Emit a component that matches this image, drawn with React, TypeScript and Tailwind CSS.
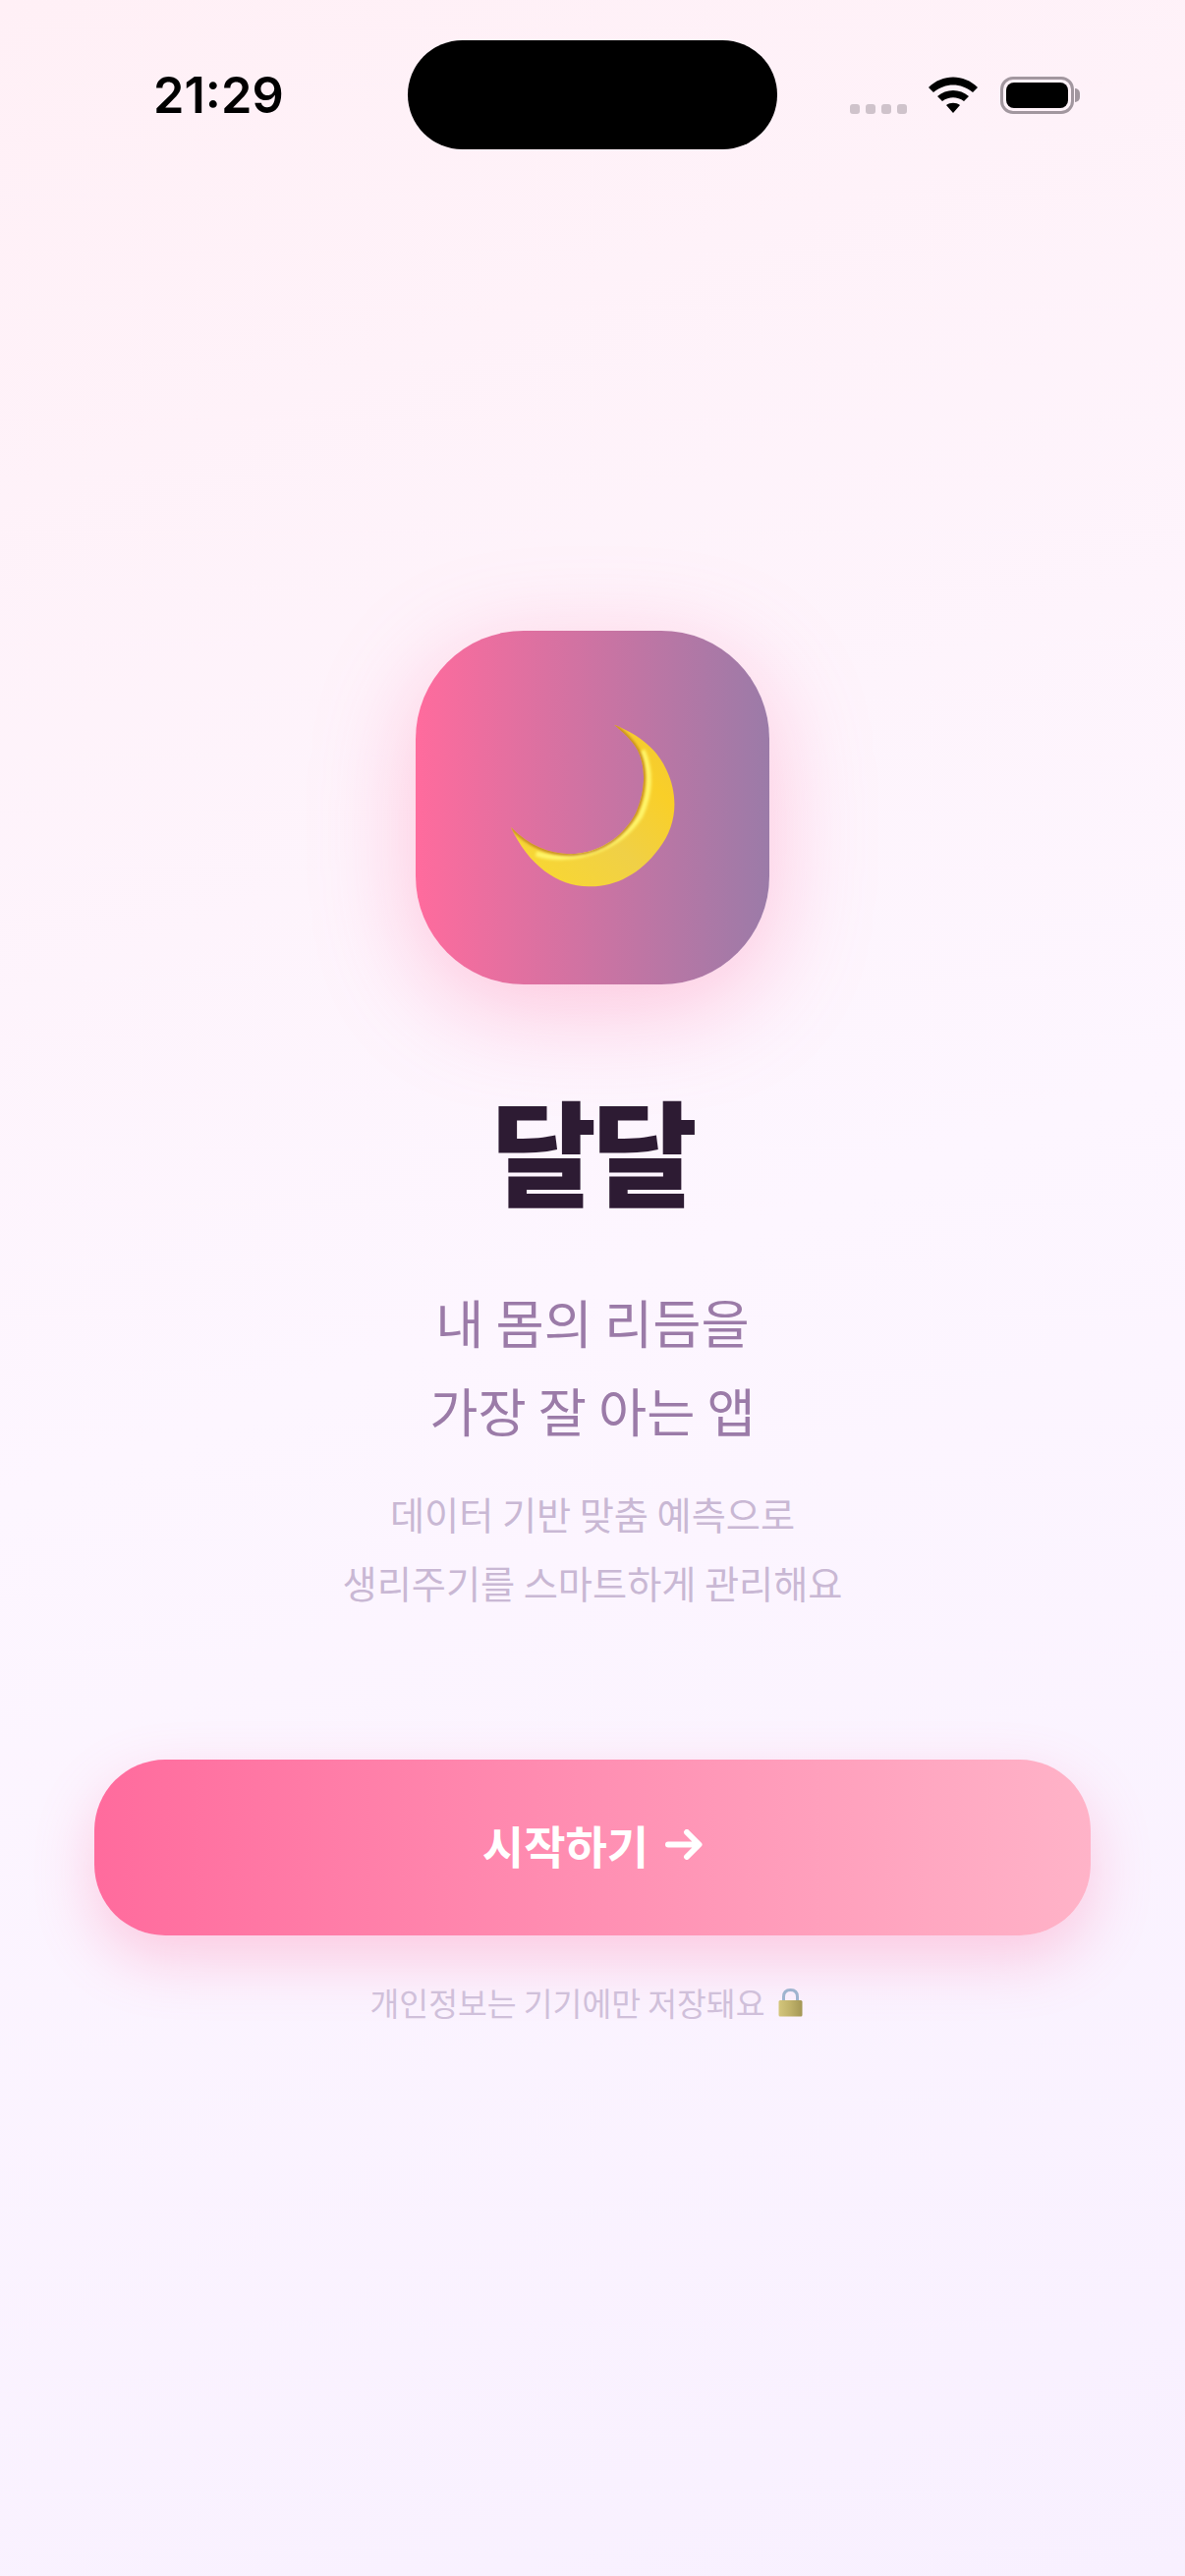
const StatusBar = () => {
  return (
    <div className="flex items-start pt-[41px] pl-[156px] h-[152px]">
      <div className="w-[259px] pt-[26px] text-[50.5px] leading-[60px] font-semibold text-black font-['Inter',sans-serif]">
        21:29
      </div>
      <div className="w-[376px] h-[111px] rounded-[56px] bg-black shrink-0" />
      <div className="flex items-start ml-[74px] pt-[37px]">
        <div className="flex gap-[6px] mt-[28px] mr-[22px]">
          <span className="w-[10px] h-[10px] rounded-[3px] bg-[#cfc3cb]" />
          <span className="w-[10px] h-[10px] rounded-[3px] bg-[#cfc3cb]" />
          <span className="w-[10px] h-[10px] rounded-[3px] bg-[#cfc3cb]" />
          <span className="w-[10px] h-[10px] rounded-[3px] bg-[#cfc3cb]" />
        </div>
        <svg width="50" height="38" viewBox="0 0 50 38" className="mr-[23px]">
          <path d="M0 11 C14 -3 36 -3 50 11 L45 16 C33 6 17 6 5 16 Z" fill="#000" />
          <path d="M9 20 C18 12 32 12 41 20 L36 25 C29 20 21 20 14 25 Z" fill="#000" />
          <path d="M18 29 C22 26 28 26 32 29 L25 37 Z" fill="#000" />
        </svg>
        <div className="relative w-[75px] h-[38px] rounded-[13px] border-[3px] border-[#a2979f] p-[3px]">
          <div className="w-full h-full rounded-[8px] bg-black" />
          <span className="absolute left-[73px] top-[9px] w-[5px] h-[14px] rounded-r-[5px] bg-[#a2979f]" />
        </div>
      </div>
    </div>
  )
}

const moonPath =
  "M678 352 C745 378 805 418 838 490 C876 570 870 660 815 730 C758 808 680 848 600 846 C505 845 415 780 363 665 C420 725 490 750 560 746 C640 740 710 690 745 620 C775 550 775 480 750 430 C730 395 705 375 678 352 Z"

const Moon = () => {
  return (
    <svg width="168" height="168" viewBox="360 350 504 504" className="-mt-[2px]">
      <defs>
        <linearGradient id="moonFill" x1="0" y1="1" x2="1" y2="0">
          <stop offset="0" stopColor="#fbd92c" />
          <stop offset="0.45" stopColor="#f0d046" />
          <stop offset="0.75" stopColor="#f9cf28" />
          <stop offset="1" stopColor="#f0c838" />
        </linearGradient>
        <filter id="moonGlow" x="-10%" y="-10%" width="120%" height="120%">
          <feGaussianBlur stdDeviation="5" />
        </filter>
        <clipPath id="moonClip">
          <path d={moonPath} />
        </clipPath>
      </defs>
      <path d={moonPath} fill="url(#moonFill)" />
      <g clipPath="url(#moonClip)">
        <path
          d="M440 745 C520 775 680 750 758 630 C790 560 790 490 765 430"
          fill="none"
          stroke="#fff66a"
          strokeWidth="16"
          filter="url(#moonGlow)"
        />
        <path
          d="M363 665 C420 725 490 750 560 746 C640 740 710 690 745 620 C775 550 775 480 750 430 C730 395 705 375 678 352"
          fill="none"
          stroke="#b9761a"
          strokeWidth="9"
          filter="url(#moonGlow)"
        />
      </g>
    </svg>
  )
}

const Lock = () => {
  return (
    <svg width="25" height="29" viewBox="0 0 25 29" className="ml-[14px] inline-block">
      <defs>
        <linearGradient id="lockBody" x1="0" y1="0" x2="1" y2="0">
          <stop offset="0" stopColor="#d4c67c" />
          <stop offset="0.5" stopColor="#bfb169" />
          <stop offset="1" stopColor="#a39655" />
        </linearGradient>
      </defs>
      <path d="M5.5 13 V8.5 C5.5 3.5 8.5 1.5 12.5 1.5 C16.5 1.5 19.5 3.5 19.5 8.5 V13" fill="none" stroke="#9fb4cf" strokeWidth="3" />
      <rect x="0.5" y="12" width="24" height="16.5" rx="1.5" fill="url(#lockBody)" />
    </svg>
  )
}

const App = () => {
  return (
    <div className="w-[1206px] h-[2622px] overflow-hidden bg-[linear-gradient(160deg,#fff0f6_0%,#fdf6ff_50%,#f8f0ff_100%)] font-['Noto_Sans_CJK_KR','Noto_Sans',sans-serif]">
      <StatusBar />
      <div className="flex flex-col items-center pt-[490px]">
        <div className="flex items-center justify-center w-[360px] h-[360px] rounded-[110px] bg-[linear-gradient(90deg,#ff6b9d,#9b7ba8)] shadow-[0_24px_100px_rgba(255,107,157,0.35)]">
          <Moon />
        </div>
        <h1 className="mt-[96px] text-[116px] leading-[140px] font-black text-[#2d1b33] tracking-[-4px]">달달</h1>
        <div className="mt-[62px] text-center text-[53.5px] leading-[90px] font-normal text-[#9b7ba8]">
          <div>내 몸의 리듬을</div>
          <div>가장 잘 아는 앱</div>
        </div>
        <div className="mt-[26px] text-center text-[38.2px] leading-[70px] font-normal text-[#c9b8d4]">
          <div>데이터 기반 맞춤 예측으로</div>
          <div>생리주기를 스마트하게 관리해요</div>
        </div>
        <button className="mt-[145px] flex items-center justify-center gap-[17px] w-[1014px] h-[179px] pb-[6px] rounded-[72px] bg-[linear-gradient(90deg,#ff6b9d,#ffb3c8)] shadow-[0_24px_60px_rgba(255,107,157,0.3)] text-white text-[46px] font-bold">
          <span>시작하기</span>
          <svg width="38" height="31" viewBox="0 0 38 31" fill="none" stroke="#fff" strokeWidth="6" strokeLinecap="round" strokeLinejoin="round">
            <path d="M3 15.5 H34 M22 3 L34.5 15.5 L22 28" />
          </svg>
        </button>
        <div className="mt-[44px] pr-[12px] flex items-center text-[32.4px] leading-[48px] text-[#d0c0da]">
          <span>개인정보는 기기에만 저장돼요</span>
          <Lock />
        </div>
      </div>
    </div>
  )
}

export default App
